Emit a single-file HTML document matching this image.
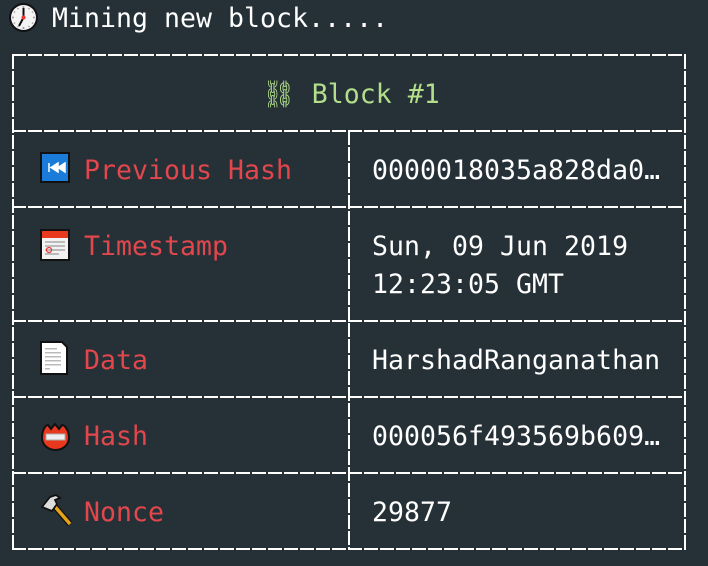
<!DOCTYPE html>
<html><head><style>
html,body{margin:0;padding:0;background:#263037;width:708px;height:566px;overflow:hidden}
body{font-family:"DejaVu Sans Mono","Liberation Mono",monospace;font-size:26.5px;letter-spacing:0.05px;position:relative}
.t{position:absolute;white-space:pre;line-height:38px}
.w{color:#ffffff}.r{color:#e2474d}.g{color:#b3df8a}
.ic{position:absolute}
</style></head><body>
<svg class="ic" style="left:8px;top:2px" width="31" height="31" viewBox="0 0 31 31">
<circle cx="15.5" cy="15.5" r="14.5" fill="#111"/><circle cx="15.5" cy="15.5" r="12.5" fill="#f4f4f4"/>
<g fill="#999"><circle cx="15.5" cy="5" r="1"/><circle cx="15.5" cy="26" r="1"/><circle cx="5" cy="15.5" r="1"/><circle cx="26" cy="15.5" r="1"/><circle cx="21" cy="6.5" r=".8"/><circle cx="10" cy="6.5" r=".8"/><circle cx="21" cy="24.5" r=".8"/><circle cx="10" cy="24.5" r=".8"/><circle cx="6.5" cy="10" r=".8"/><circle cx="24.5" cy="10" r=".8"/><circle cx="6.5" cy="21" r=".8"/><circle cx="24.5" cy="21" r=".8"/></g>
<path d="M15.5 15.5V6M15.5 15.5L11 24" stroke="#111" stroke-width="2"/><circle cx="15.5" cy="15.5" r="2" fill="#e33"/>
</svg>
<div class="t w" style="left:52px;top:0px">Mining new block.....</div>
<svg class="ic" style="left:0;top:0" width="708" height="566">
<g stroke="#fff" stroke-width="2" stroke-dasharray="14 2" fill="none">
<line x1="12" y1="55" x2="686" y2="55"/>
<line x1="12" y1="131" x2="686" y2="131"/>
<line x1="12" y1="207" x2="686" y2="207"/>
<line x1="12" y1="321" x2="686" y2="321"/>
<line x1="12" y1="397" x2="686" y2="397"/>
<line x1="12" y1="473" x2="686" y2="473"/>
<line x1="12" y1="549" x2="686" y2="549"/>
<line x1="13" y1="55" x2="13" y2="549"/>
<line x1="349" y1="131" x2="349" y2="549"/>
<line x1="685" y1="55" x2="685" y2="549"/>
</g></svg>
<div class="t g" style="left:262px;top:76px">⛓ Block #1</div>
<svg class="ic" style="left:40px;top:152px" width="30" height="31"><rect x="0" y="0" width="30" height="31" fill="#111"/><rect x="2" y="2" width="26" height="27" fill="#1a7bd8"/><path d="M9 11v9M18 11l-7 4.5 7 4.5zM25 11l-7 4.5 7 4.5z" fill="#fff" stroke="#fff" stroke-width="1.5"/></svg>
<div class="t r" style="left:84px;top:152px">Previous Hash</div>
<div class="t w" style="left:372px;top:152px">0000018035a828da0…</div>
<svg class="ic" style="left:40px;top:229px" width="30" height="32"><rect width="30" height="32" fill="#111"/><rect x="2" y="2" width="26" height="28" fill="#f2f2f2"/><rect x="2" y="2" width="26" height="7" fill="#e8381e"/><g fill="#bbb"><rect x="5" y="12" width="20" height="2"/><rect x="5" y="16" width="20" height="2"/><rect x="5" y="20" width="20" height="2"/><rect x="5" y="24" width="14" height="2"/></g><circle cx="9" cy="21" r="2.5" fill="none" stroke="#e33" stroke-width="1.2"/></svg>
<div class="t r" style="left:84px;top:228px">Timestamp</div>
<div class="t w" style="left:372px;top:228px">Sun, 09 Jun 2019
12:23:05 GMT</div>
<svg class="ic" style="left:40px;top:341px" width="28" height="34"><path d="M1 1h21l5 5v27H1z" fill="#fff" stroke="#111" stroke-width="2"/><g fill="#bbb"><rect x="5" y="7" width="12" height="1.5"/><rect x="5" y="11" width="16" height="1.5"/><rect x="5" y="15" width="16" height="1.5"/><rect x="5" y="19" width="16" height="1.5"/><rect x="5" y="23" width="16" height="1.5"/><rect x="5" y="27" width="5" height="1.5"/></g></svg>
<div class="t r" style="left:84px;top:342px">Data</div>
<div class="t w" style="left:372px;top:342px">HarshadRanganathan</div>
<svg class="ic" style="left:40px;top:421px" width="31" height="30"><path d="M2 17C2 8 6 4 8 4l3 4 4-5 4 5 3-4c2 0 7 4 7 13a13.5 12 0 0 1-27 0z" fill="#e8381e" stroke="#111" stroke-width="2"/><rect x="6" y="13" width="19" height="6" fill="#eee" stroke="#aaa"/></svg>
<div class="t r" style="left:84px;top:418px">Hash</div>
<div class="t w" style="left:372px;top:418px">000056f493569b609…</div>
<svg class="ic" style="left:40px;top:493px" width="32" height="34"><path d="M11 9l19 22" stroke="#111" stroke-width="6"/><path d="M11 9l19 22" stroke="#e7a317" stroke-width="3.5"/><path d="M2 14l8-10 6-2 4 3-5 2 2 4-5 7z" fill="#ddd" stroke="#111" stroke-width="1.8"/></svg>
<div class="t r" style="left:84px;top:494px">Nonce</div>
<div class="t w" style="left:372px;top:494px">29877</div>
</body></html>
